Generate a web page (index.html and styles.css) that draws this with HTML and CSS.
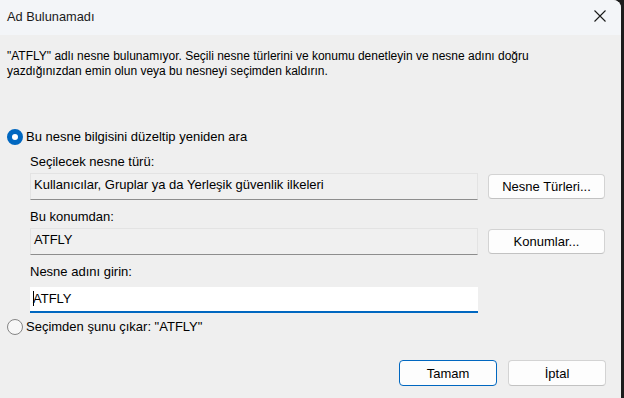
FILE: index.html
```html
<!DOCTYPE html>
<html lang="tr">
<head>
    <meta charset="UTF-8">
    <meta name="viewport" content="width=device-width, initial-scale=1.0">
    <title>Ad Bulunamadı</title>
    <link rel="stylesheet" href="styles.css">
</head>
<body>
    <div class="window">
        <!-- Başlık çubuğu -->
        <div class="titlebar">
            <span class="title">Ad Bulunamadı</span>
            <svg class="close" width="12" height="12" viewBox="0 0 12 12">
                <path d="M0.5 0.5 L11.5 11.5 M11.5 0.5 L0.5 11.5" stroke="#1a1a1a" stroke-width="1.1" fill="none"/>
            </svg>
        </div>

        <div class="content">
            <p class="message">"ATFLY" adlı nesne bulunamıyor. Seçili nesne türlerini ve konumu denetleyin ve nesne adını doğru yazdığınızdan emin olun veya bu nesneyi seçimden kaldırın.</p>

            <!-- Seçenek 1 -->
            <div class="radio-row first">
                <span class="radio checked"></span>
                <span>Bu nesne bilgisini düzeltip yeniden ara</span>
            </div>

            <div class="group">
                <div class="label">Seçilecek nesne türü:</div>
                <div class="field-row">
                    <div class="readonly">Kullanıcılar, Gruplar ya da Yerleşik güvenlik ilkeleri</div>
                    <button type="button" class="btn">Nesne Türleri...</button>
                </div>

                <div class="label">Bu konumdan:</div>
                <div class="field-row">
                    <div class="readonly">ATFLY</div>
                    <button type="button" class="btn">Konumlar...</button>
                </div>

                <div class="label">Nesne adını girin:</div>
                <div class="input"><span class="caret"></span>ATFLY</div>
            </div>

            <!-- Seçenek 2 -->
            <div class="radio-row second">
                <span class="radio"></span>
                <span>Seçimden şunu çıkar: "ATFLY"</span>
            </div>

            <div class="actions">
                <button type="button" class="btn default">Tamam</button>
                <button type="button" class="btn">İptal</button>
            </div>
        </div>
    </div>
</body>
</html>
```

FILE: styles.css
```css
html, body {
    margin: 0;
    height: 100%;
}

body {
    background-color: #1c1c1c; /* masaüstü kenarı */
    font-family: "Liberation Sans", Arial, sans-serif;
    font-size: 13px;
    line-height: 15px;
    color: #000;
}

.window {
    width: 621px;
    height: 398px;
    background-color: #efefef;
    border-top-right-radius: 8px;
    overflow: hidden;
    display: flex;
    flex-direction: column;
}

.titlebar {
    height: 35px;
    background-color: #f3f5f8;
    display: flex;
    align-items: center;
    justify-content: space-between;
    padding: 0 15px 0 7px;
    flex-shrink: 0;
}

.title {
    font-size: 12.8px;
    color: #1a1a1a;
    margin-top: -2px;
}

.close {
    margin-top: -3px;
}

.content {
    padding: 0 15px 0 7px;
    display: flex;
    flex-direction: column;
}

.message {
    margin: 14px 0 0 0;
    padding-right: 60px;
    font-size: 12px;
}

.radio-row {
    display: flex;
    align-items: center;
    gap: 3px;
    height: 16px;
    line-height: 16px;
}

.radio-row.first {
    margin-top: 50px;
}

.radio-row.second {
    margin-top: 6px;
}

.radio {
    width: 16px;
    height: 16px;
    box-sizing: border-box;
    border-radius: 50%;
    border: 1px solid #858585;
    background-color: #f7f7f7;
}

.radio.checked {
    border: 5px solid #0067c0;
    background-color: #fff;
}

.group {
    padding-left: 23px;
    display: flex;
    flex-direction: column;
}

.label {
    margin-top: 9px;
    margin-bottom: 4px;
}

.field-row {
    display: flex;
    align-items: center;
    gap: 10px;
}

.readonly {
    width: 448px;
    height: 27px;
    box-sizing: border-box;
    padding: 3px 3px 0 3px;
    border: 1px solid #e3e3e3;
    border-bottom-color: #8d8d8d;
    background-color: #f0f0f0;
}

.btn {
    font-family: "Liberation Sans", Arial, sans-serif;
    font-size: 13px;
    color: #000;
    width: 117px;
    height: 25px;
    background-color: #fdfdfd;
    border: 1px solid #d3d3d3;
    border-bottom-color: #c2c2c2;
    border-radius: 4px;
    padding: 0;
}

.input {
    width: 448px;
    height: 26px;
    box-sizing: border-box;
    margin-top: 4px;
    padding: 4px 3px 0 3px;
    background-color: #fff;
    border-bottom: 2px solid #0067c0;
    position: relative;
}

.caret {
    position: absolute;
    left: 3px;
    top: 4px;
    width: 1px;
    height: 15px;
    background-color: #000;
}

.actions {
    display: flex;
    justify-content: flex-end;
    gap: 11px;
    margin-top: 25px;
}

.actions .btn {
    width: 98px;
    height: 26px;
}

.btn.default {
    border-color: #0067c0;
}
```
